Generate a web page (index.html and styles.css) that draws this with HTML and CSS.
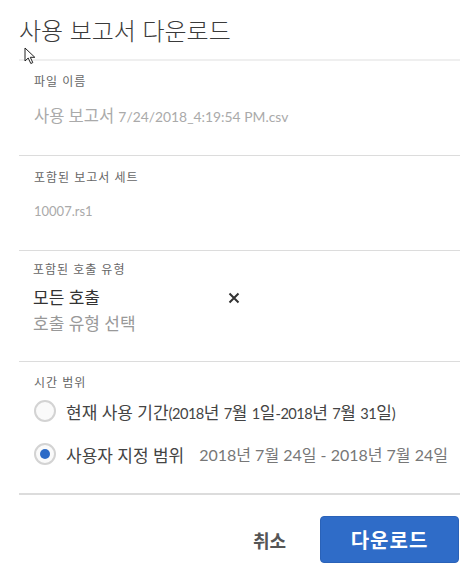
FILE: index.html
```html
<!DOCTYPE html>
<html lang="ko">
<head>
    <meta charset="utf-8">
    <title>사용 보고서 다운로드</title>
    <link rel="stylesheet" href="styles.css">
</head>
<body>
    <div class="dialog">
        <h1 class="title">사용 보고서 다운로드</h1>

        <div class="section first">
            <div class="label">파일 이름</div>
            <div class="value">사용 보고서 <span class="n">7/24/2018_4:19:54 PM.csv</span></div>
        </div>

        <div class="section report">
            <div class="label">포함된 보고서 세트</div>
            <div class="value small">10007.rs1</div>
        </div>

        <div class="section calls">
            <div class="label">포함된 호출 유형</div>
            <div class="tag">
                <span class="tag-name">모든 호출</span>
                <svg class="remove" width="12" height="12" viewBox="0 0 12 12">
                    <path d="M1.5 1.5 L10.5 10.5 M10.5 1.5 L1.5 10.5" stroke="#333" stroke-width="2" fill="none"/>
                </svg>
            </div>
            <div class="placeholder">호출 유형 선택</div>
        </div>

        <div class="section range">
            <div class="label">시간 범위</div>
            <label class="radio-row">
                <span class="radio"></span>
                <span class="radio-text">현재 사용 기간<span class="d">(2018</span>년 <span class="d">7</span>월 <span class="d">1</span>일<span class="d">-2018</span>년 <span class="d">7</span>월 <span class="d">31</span>일<span class="d">)</span></span>
            </label>
            <label class="radio-row">
                <span class="radio checked"></span>
                <span class="radio-text">사용자 지정 범위</span>
                <span class="dates">2018년 7월 24일 - 2018년 7월 24일</span>
            </label>
        </div>

        <div class="footer">
            <button class="btn-cancel">취소</button>
            <button class="btn-primary">다운로드</button>
        </div>
    </div>

    <!-- mouse pointer -->
    <svg class="cursor" width="13" height="18" viewBox="0 0 13 18">
        <path d="M1 1 L1 14 L4.2 11 L6.8 16.5 L8.8 15.6 L6.3 10.3 L10.8 10.3 Z" fill="#fff" stroke="#222" stroke-width="1" stroke-linejoin="round"/>
    </svg>
</body>
</html>
```

FILE: styles.css
```css
body{
    margin: 0;
    background: #fff;
    font-family: Lato, "Noto Sans CJK KR", sans-serif;
    color: #333;
}
.dialog{
    padding: 0 16px 0 19px;
}
.title{
    margin: 0;
    padding-top: 14px;
    height: 45px;
    font-size: 24px;
    font-weight: 300;
    line-height: 34px;
    color: #3a3a3a;
    border-bottom: 2px solid #efefef;
}
.section{
    border-top: 1px solid #dcdcdc;
    padding-left: 15px;
}
.section.first{
    border-top: none;
    padding-top: 12px;
    height: 82px;
}
.section.report{
    padding-top: 13px;
    height: 81px;
}
.section.calls{
    padding-top: 10px;
    padding-left: 14px;
    height: 100px;
}
.section.range{
    padding-top: 12px;
    height: 119px;
}
.label{
    font-size: 12px;
    line-height: 18px;
    color: #666;
    letter-spacing: 1px;
}
.value{
    margin-top: 13px;
    font-size: 16.5px;
    line-height: 24px;
    color: #aaa;
}
.value.small{
    font-size: 13px;
    line-height: 22px;
}
/* latin runs are set smaller, like the original font */
.n{
    font-size: 0.84em;
}
.d{
    font-size: 0.86em;
    letter-spacing: -0.5px;
}
.tag{
    margin-top: 7px;
    display: flex;
    align-items: center;
    width: 207px;
    justify-content: space-between;
    font-size: 17px;
    line-height: 24px;
    color: #333;
}
.placeholder{
    margin-top: 2px;
    font-size: 17px;
    line-height: 24px;
    color: #999;
}
.radio-row{
    display: flex;
    align-items: center;
    height: 30px;
    margin-top: 4px;
    font-size: 17px;
}
.radio-row + .radio-row{
    margin-top: 13px;
}
.radio{
    box-sizing: border-box;
    width: 22px;
    height: 22px;
    border: 2px solid #d3d3d3;
    border-radius: 50%;
    background: #fafafa;
    margin-right: 10px;
    display: flex;
    align-items: center;
    justify-content: center;
}
.radio.checked::after{
    content: "";
    width: 10px;
    height: 10px;
    border-radius: 50%;
    background: #2d6bc7;
}
.radio-text{
    color: #444;
}
.dates{
    margin-left: 15px;
    font-size: 16px;
    color: #777;
}
.footer{
    border-top: 2px solid #dcdcdc;
    padding-top: 21px;
    display: flex;
    justify-content: flex-end;
    align-items: center;
}
.btn-cancel{
    border: none;
    background: none;
    font-family: inherit;
    font-size: 18px;
    font-weight: bold;
    color: #555;
    margin-right: 24px;
    padding: 0 10px;
}
.btn-primary{
    width: 139px;
    height: 47px;
    border: 1px solid #2a62b8;
    border-radius: 4px;
    background: #2f6cc8;
    color: #fff;
    font-family: inherit;
    font-size: 20px;
    font-weight: bold;
    letter-spacing: 1px;
    margin-right: 1px;
}
.cursor{
    position: absolute;
    left: 24px;
    top: 47px;
}
```
